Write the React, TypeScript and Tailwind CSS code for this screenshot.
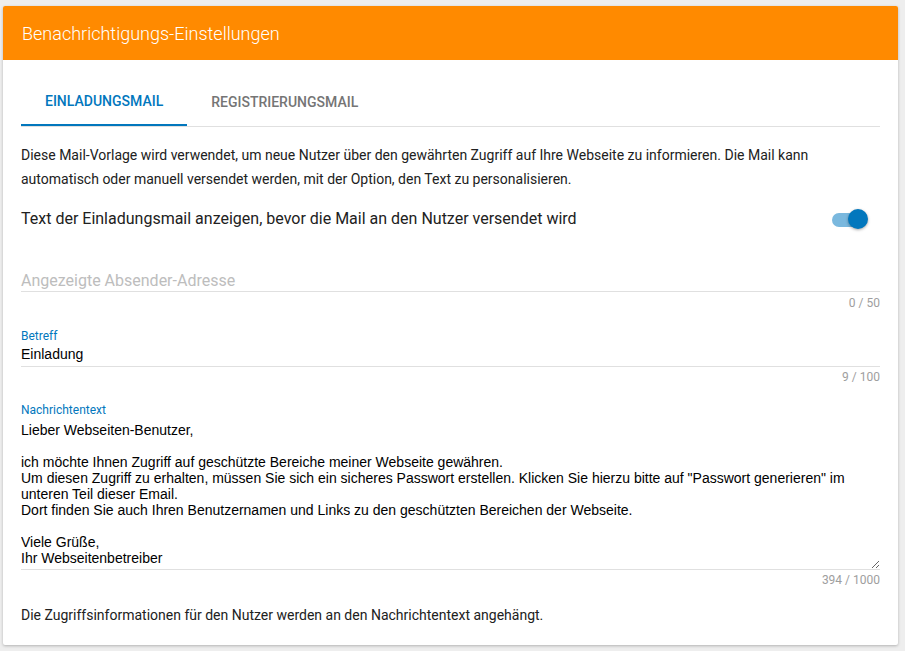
import React from "react";

const body = `Lieber Webseiten-Benutzer,

ich möchte Ihnen Zugriff auf geschützte Bereiche meiner Webseite gewähren.
Um diesen Zugriff zu erhalten, müssen Sie sich ein sicheres Passwort erstellen. Klicken Sie hierzu bitte auf "Passwort generieren" im unteren Teil dieser Email.
Dort finden Sie auch Ihren Benutzernamen und Links zu den geschützten Bereichen der Webseite.

Viele Grüße,
Ihr Webseitenbetreiber`;

export default function App() {
  return (
    <div className="min-h-[651px] bg-[#eeeeee] pt-[6px] pl-[3px]" style={{ fontFamily: "Roboto, sans-serif" }}>
      <div className="w-[895px] bg-white rounded-[2px] shadow-[0_1px_3px_rgba(0,0,0,0.25)] overflow-hidden">
        <div className="h-[54px] bg-[#ff8a00] flex items-center pl-[19px] text-white text-[18px] font-light">
          Benachrichtigungs-Einstellungen
        </div>
        <div className="px-[18px] pt-[18px] pb-[20px]">
          <div className="flex border-b border-[#e0e0e0]">
            <div className="h-[48px] px-6 flex items-center text-[14px] font-medium text-[#0277bd] border-b-2 border-[#0277bd] -mb-px">
              EINLADUNGSMAIL
            </div>
            <div className="h-[48px] px-6 flex items-center text-[14px] font-medium text-[#757575]">
              REGISTRIERUNGSMAIL
            </div>
          </div>
          <p className="mt-[16px] text-[14px] leading-[24px] text-[#212121]">
            Diese Mail-Vorlage wird verwendet, um neue Nutzer über den gewährten Zugriff auf Ihre Webseite zu informieren. Die Mail kann automatisch oder manuell versendet werden, mit der Option, den Text zu personalisieren.
          </p>
          <div className="mt-[16px] flex items-center justify-between h-[24px]">
            <span className="text-[16px] leading-[24px] text-[#212121]">
              Text der Einladungsmail anzeigen, bevor die Mail an den Nutzer versendet wird
            </span>
            <div className="relative w-[36px] h-[20px] mr-[12px]">
              <div className="absolute left-[0px] top-[4px] w-[34px] h-[14px] rounded-full bg-[#7ab8de]" />
              <div className="absolute right-0 top-0 w-[20px] h-[20px] rounded-full bg-[#0277bd] shadow-[0_1px_3px_rgba(0,0,0,0.35)]" />
            </div>
          </div>
          <div className="mt-[36px] h-[25px] pt-[2px] border-b border-[#e0e0e0] text-[16px] leading-[24px] text-[#bdbdbd]">
            Angezeigte Absender-Adresse
          </div>
          <div className="mt-[3px] text-right text-[12px] leading-[16px] text-[#9e9e9e]">0 / 50</div>

          <div className="mt-[17px] text-[12px] leading-[16px] text-[#0277bd]">Betreff</div>
          <div
            className="h-[23px] border-b border-[#e0e0e0] text-[14px] leading-[20px] text-black"
            style={{ fontFamily: "'Liberation Sans', Arial, sans-serif" }}
          >
            Einladung
          </div>
          <div className="mt-[2px] text-right text-[12px] leading-[16px] text-[#9e9e9e]">9 / 100</div>

          <div className="mt-[17px] text-[12px] leading-[16px] text-[#0277bd]">Nachrichtentext</div>
          <textarea
            className="block w-full h-[152px] border-0 border-b border-[#e0e0e0] outline-none text-[14px] leading-[16px] text-black p-0 pt-[4px] resize-y overflow-hidden"
            style={{ fontFamily: "'Liberation Sans', Arial, sans-serif" }}
            defaultValue={body}
            readOnly
          />
          <div className="mt-[2px] text-right text-[12px] leading-[16px] text-[#9e9e9e]">394 / 1000</div>

          <p className="mt-[17px] text-[14px] leading-[20px] text-[#212121]">
            Die Zugriffsinformationen für den Nutzer werden an den Nachrichtentext angehängt.
          </p>
        </div>
      </div>
    </div>
  );
}
